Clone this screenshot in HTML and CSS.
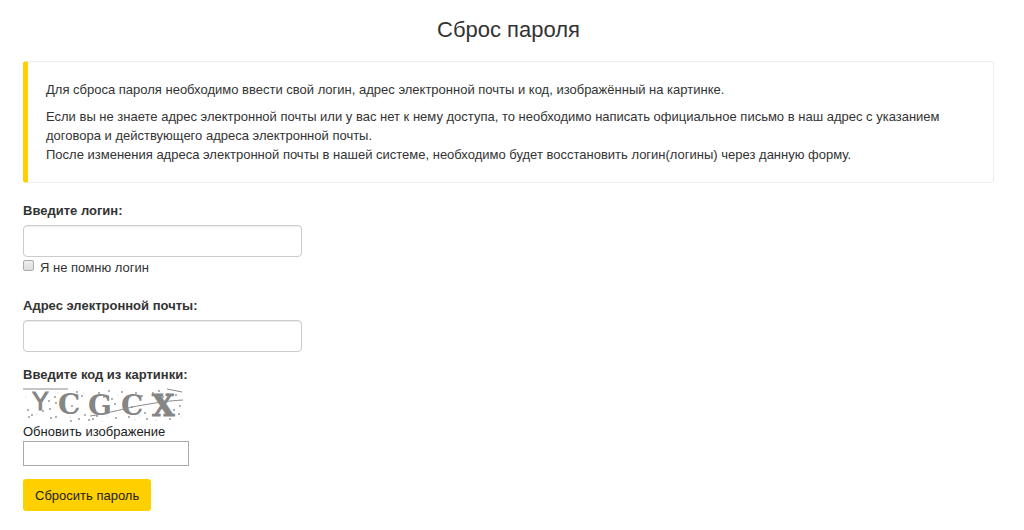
FILE: index.html
```html
<!DOCTYPE html>
<html lang="ru">
<head>
<meta charset="utf-8">
<title>Сброс пароля</title>
<link rel="stylesheet" href="styles.css">
</head>
<body>
<main class="page">
  <h1 class="title">Сброс пароля</h1>
  <section class="callout">
    <p>Для сброса пароля необходимо ввести свой логин, адрес электронной почты и код, изображённый на картинке.</p>
    <p>Если вы не знаете адрес электронной почты или у вас нет к нему доступа, то необходимо написать официальное письмо в наш адрес с указанием договора и действующего адреса электронной почты.<br>После изменения адреса электронной почты в нашей системе, необходимо будет восстановить логин(логины) через данную форму.</p>
  </section>
  <form class="form">
    <div class="field">
      <label class="label" for="login">Введите логин:</label>
      <input class="input" id="login" type="text">
      <div class="check">
        <input class="checkbox" id="forgot" type="checkbox">
        <label for="forgot">Я не помню логин</label>
      </div>
    </div>
    <div class="field">
      <label class="label" for="email">Адрес электронной почты:</label>
      <input class="input" id="email" type="text">
    </div>
    <div class="captcha">
      <label class="captcha-label" for="code">Введите код из картинки:</label>
      <svg class="captcha-image" viewBox="0 0 160 34" width="160" height="34" role="img" aria-label="Код">
        <g fill="#858585">
          <text class="code-thin" x="9" y="22">Y</text>
          <text class="code" x="35" y="26">C</text>
          <text class="code" x="65" y="27">G</text>
          <text class="code" x="98" y="27">C</text>
          <text class="code-heavy" x="129" y="28">X</text>
        </g>
        <g fill="none" stroke="#8a8a8a">
          <path d="M0 1H45"/>
          <path d="M67 28C88 25 102 20 120 17S145 13 160 12"/>
          <path d="M144 1l15 3"/>
        </g>
        <path fill="none" stroke="#8c8c8c" stroke-width="1.8" stroke-linecap="round" d="M5 22h0M6 29h0M9 27h0M20 23h0M26 13h0M27 21h0M32 9h0M33 15h0M33 29h0M28 30h0M39 13h0M49 18h0M52 24h0M54 4h0M59 8h0M48 33h0M56 31h0M62 27h0M66 32h0M70 31h0M74 28h0M76 5h0M81 9h0M86 3h0M89 11h0M92 16h0M93 30h0M99 4h0M104 9h0M106 29h0M109 19h0M113 5h0M119 8h0M122 25h0M124 31h0M130 5h0M136 3h0M140 9h0M147 31h0M153 7h0M157 18h0M156 26h0M151 22h0M145 6h0"/>
        <path fill="none" stroke="#bbb" stroke-linecap="round" d="M3 9h0M14 26h0M24 4h0M35 5h0M43 9h0M47 29h0M61 5h0M79 33h0M84 28h0M95 7h0M112 32h0M116 28h0M127 16h0M133 32h0M158 29h0"/>
      </svg>
      <button class="refresh" type="button">Обновить изображение</button>
      <input class="code-input" id="code" type="text">
    </div>
    <button class="submit" type="submit">Сбросить пароль</button>
  </form>
</main>
</body>
</html>
```

FILE: styles.css
```css
* { box-sizing: border-box; }
body {
  margin: 0;
  background: #fff;
  color: #333;
  font: 13px/19px "Liberation Sans", Arial, sans-serif;
}
input, button { font: inherit; }
.page { padding: 17px 30px 16px 23px; }
.title {
  margin: 0 0 18px;
  font-size: 22px;
  line-height: 26px;
  font-weight: 400;
  text-align: center;
}
.callout {
  padding: 18px;
  border: 1px solid #eee;
  border-left: 5px solid #ffd000;
  border-radius: 3px;
}
.callout p { margin: 0 0 8px; }
.callout p:last-child { margin-bottom: 0; }
.form {
  display: flex;
  flex-direction: column;
  align-items: flex-start;
  padding-top: 18px;
}
.field {
  display: flex;
  flex-direction: column;
  width: 279px;
  max-width: 100%;
  margin-bottom: 13px;
}
.label { font-weight: 700; margin-bottom: 5px; }
.input {
  height: 32px;
  padding: 5px 11px;
  border: 1px solid #ccc;
  border-radius: 4px;
  background: #fff;
  box-shadow: inset 0 1px 1px rgba(0, 0, 0, .075);
}
.check {
  display: flex;
  gap: 6px;
  padding: 1px 0 6px;
}
.checkbox {
  appearance: none;
  width: 11px;
  height: 11px;
  margin: 2px 0 0;
  border: 1px solid #aaa;
  border-radius: 2px;
  background: linear-gradient(#eee, #ddd);
}
.checkbox:checked { background: #777; }
.captcha {
  display: flex;
  flex-direction: column;
  align-items: flex-start;
  margin-bottom: 13px;
}
.captcha-label { font-weight: 700; margin-bottom: 4px; }
.captcha-image { display: block; }
.code-thin { font: 400 25px "Liberation Sans", sans-serif; stroke: #858585; }
.code { font: 700 28px "DejaVu Serif", serif; }
.code-heavy { font: 700 29px "DejaVu Serif", serif; stroke: #858585; }
.refresh {
  padding: 0;
  border: 0;
  background: none;
  color: #222;
  cursor: pointer;
}
.code-input {
  width: 166px;
  height: 25px;
  border: 1px solid #aaa;
  background: #fff;
}
.submit {
  height: 32px;
  padding: 0 12px;
  border: 0;
  border-radius: 3px;
  background: #ffd000;
  color: #222;
  cursor: pointer;
}
```
